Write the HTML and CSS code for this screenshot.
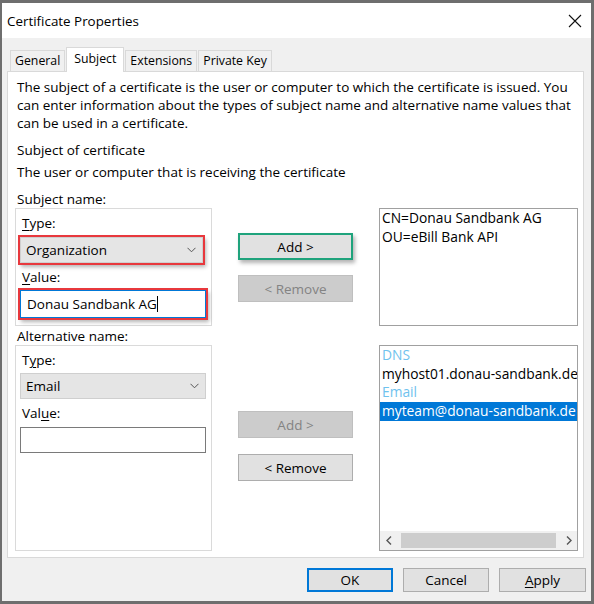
FILE: index.html
```html
<!DOCTYPE html>
<html lang="en">
  <head>
    <meta charset="UTF-8" />
    <meta name="viewport" content="width=device-width, initial-scale=1.0" />
    <title>Certificate Properties</title>
    <link rel="stylesheet" href="styles.css">
  </head>
  <body>
    <div class="window">
      <div class="titlebar">
        <span class="title">Certificate Properties</span>
        <svg class="close" width="14" height="14" viewBox="0 0 14 14">
          <path d="M1 1 L13 13 M13 1 L1 13" stroke="#111" stroke-width="1.1" fill="none" />
        </svg>
      </div>
      <div class="client">
        <div class="tabs">
          <div class="tab">General</div>
          <div class="tab active">Subject</div>
          <div class="tab">Extensions</div>
          <div class="tab">Private Key</div>
        </div>
        <div class="panel">
          <p class="text desc">The subject of a certificate is the user or computer to which the certificate is issued. You can enter information about the types of subject name and alternative name values that can be used in a certificate.</p>
          <p class="text heading">Subject of certificate</p>
          <p class="text sub">The user or computer that is receiving the certificate</p>
          <p class="text group-title">Subject name:</p>
          <div class="row row-subject">
            <div class="group">
              <div class="field-label"><u>T</u>ype:</div>
              <div class="combo marked-red">
                <span>Organization</span>
                <svg width="9" height="6" viewBox="0 0 9 6"><path d="M0.5 0.8 L4.5 4.8 L8.5 0.8" stroke="#555" fill="none" /></svg>
              </div>
              <div class="field-label"><u>V</u>alue:</div>
              <div class="textbox focused marked-red">Donau Sandbank AG<span class="caret"></span></div>
            </div>
            <div class="actions">
              <button class="btn marked-green">Add &gt;</button>
              <button class="btn disabled">&lt; Remove</button>
            </div>
            <div class="listbox">
              <div class="item">CN=Donau Sandbank AG</div>
              <div class="item">OU=eBill Bank API</div>
            </div>
          </div>
          <p class="text group-title">Alternative name:</p>
          <div class="row row-alt">
            <div class="group">
              <div class="field-label">T<u>y</u>pe:</div>
              <div class="combo">
                <span>Email</span>
                <svg width="9" height="6" viewBox="0 0 9 6"><path d="M0.5 0.8 L4.5 4.8 L8.5 0.8" stroke="#555" fill="none" /></svg>
              </div>
              <div class="field-label">Val<u>u</u>e:</div>
              <div class="textbox"></div>
            </div>
            <div class="actions">
              <button class="btn disabled">Add &gt;</button>
              <button class="btn">&lt; Remove</button>
            </div>
            <div class="listbox">
              <div class="items">
                <div class="item type">DNS</div>
                <div class="item">myhost01.donau-sandbank.de</div>
                <div class="item type">Email</div>
                <div class="item selected">myteam@donau-sandbank.de</div>
              </div>
              <div class="hscroll">
                <span class="arrow">
                  <svg width="6" height="9" viewBox="0 0 6 9"><path d="M5 0.5 L1 4.5 L5 8.5" stroke="#555" stroke-width="1.4" fill="none" /></svg>
                </span>
                <span class="track"><span class="thumb"></span></span>
                <span class="arrow">
                  <svg width="6" height="9" viewBox="0 0 6 9"><path d="M1 0.5 L5 4.5 L1 8.5" stroke="#555" stroke-width="1.4" fill="none" /></svg>
                </span>
              </div>
            </div>
          </div>
        </div>
        <div class="footer">
          <button class="dlg-btn default">OK</button>
          <button class="dlg-btn">Cancel</button>
          <button class="dlg-btn apply"><u>A</u>pply</button>
        </div>
      </div>
    </div>
  </body>
</html>
```

FILE: styles.css
```css
body {
  margin: 0;
  font-family: "Open Sans", "Noto Sans", sans-serif;
  font-size: 13.5px;
  color: #000;
}
u {
  text-decoration-thickness: 1px;
  text-underline-offset: 2px;
}
.window {
  width: 594px;
  height: 604px;
  box-sizing: border-box;
  border: 3px solid #6e6e6e;
  border-left-width: 2px;
  display: flex;
  flex-direction: column;
  background: #f0f0f0;
}
.titlebar {
  height: 35px;
  flex-shrink: 0;
  background: #fff;
  display: flex;
  align-items: center;
  justify-content: space-between;
  padding: 0 9px 0 5px;
}
.title {
  font-size: 13.4px;
}
.client {
  flex: 1;
  display: flex;
  flex-direction: column;
  padding: 0 5px;
}

/* tabs */
.tabs {
  display: flex;
  align-items: flex-end;
  padding: 9px 0 0 3px;
  font-size: 12.3px;
}
.tab {
  height: 21px;
  line-height: 20px;
  box-sizing: border-box;
  padding: 0 4px;
  border: 1px solid #d9d9d9;
  border-bottom: none;
  margin-right: 1px;
  background: #f0f0f0;
}
.tab.active {
  position: relative;
  z-index: 1;
  height: 25px;
  line-height: 21px;
  padding: 0 7px;
  margin-bottom: -1px;
  background: #fff;
}

.panel {
  background: #fff;
  border: 1px solid #d9d9d9;
  margin-right: 2px;
  padding: 6px 5px 6px 7px;
  display: flex;
  flex-direction: column;
}
.text {
  margin: 0;
  padding-left: 2px;
  line-height: 18px;
}
.heading {
  margin-top: 9px;
}
.sub {
  margin-top: 4px;
}
.group-title {
  margin-top: 1px;
}
.sub + .group-title {
  margin-top: 9px;
}

/* subject / alternative rows */
.row {
  display: grid;
  grid-template-columns: 197px 1fr 199px;
}
.row-subject {
  height: 118px;
}
.row-alt {
  height: 206px;
}
.group {
  border: 1px solid #dadada;
  padding: 5px 5px 0 4px;
}
.field-label {
  line-height: 18px;
  padding-left: 2px;
}
.combo {
  height: 26px;
  box-sizing: border-box;
  margin: 4px 0 5px;
  padding: 0 6px 0 5px;
  background: #e5e5e5;
  border: 1px solid #cfcfcf;
  display: flex;
  align-items: center;
  justify-content: space-between;
}
.row-subject .combo {
  margin-top: 5px;
  width: 183px;
}
.textbox {
  height: 26px;
  box-sizing: border-box;
  margin-top: 5px;
  padding-left: 6px;
  line-height: 24px;
  background: #fff;
  border: 1px solid #7a7a7a;
}
.textbox.focused {
  height: 28px;
  margin-top: 4px;
  line-height: 26px;
  border-color: #0078d7;
}
.caret {
  display: inline-block;
  width: 1px;
  height: 16px;
  background: #000;
  vertical-align: -3px;
}
.marked-red {
  box-shadow: 0 0 0 2px #e8383d, 2px 3px 4px 1px rgba(0, 0, 0, 0.3);
}

.actions {
  display: flex;
  flex-direction: column;
  padding-left: 26px;
}
.row-subject .actions {
  padding-top: 25px;
  gap: 15px;
}
.row-alt .actions {
  padding-top: 66px;
  gap: 16px;
}
.btn,
.dlg-btn {
  font: inherit;
  color: #000;
  background: #e1e1e1;
  border: 1px solid #adadad;
  padding: 0;
  box-sizing: border-box;
}
.btn {
  width: 115px;
  height: 27px;
}
.btn.disabled {
  background: #cccccc;
  border-color: #bfbfbf;
  color: #838383;
}
.btn.marked-green {
  border: 2px solid #1fa37c;
  box-shadow: 2px 3px 4px rgba(0, 0, 0, 0.3);
}

.listbox {
  border: 1px solid #a0a0a0;
  display: flex;
  flex-direction: column;
  overflow: hidden;
  font-size: 13.8px;
}
.items {
  flex: 1;
}
.item {
  line-height: 18.7px;
  padding-left: 2px;
  white-space: nowrap;
}
.item.type {
  color: #6fc2ee;
}
.item.selected {
  background: #0078d7;
  color: #fff;
}
.hscroll {
  height: 19px;
  display: flex;
  background: #f0f0f0;
}
.arrow {
  width: 17px;
  display: flex;
  align-items: center;
  justify-content: center;
}
.track {
  flex: 1;
  padding: 2px 4px;
  display: flex;
}
.thumb {
  flex: 1;
  background: #cdcdcd;
}

.footer {
  display: flex;
  justify-content: flex-end;
  gap: 10px;
  padding: 10px 0 8px;
}
.dlg-btn {
  width: 86px;
  height: 24px;
}
.dlg-btn.apply {
  width: 87px;
}
.dlg-btn.default {
  border: 2px solid #0078d7;
}
```
